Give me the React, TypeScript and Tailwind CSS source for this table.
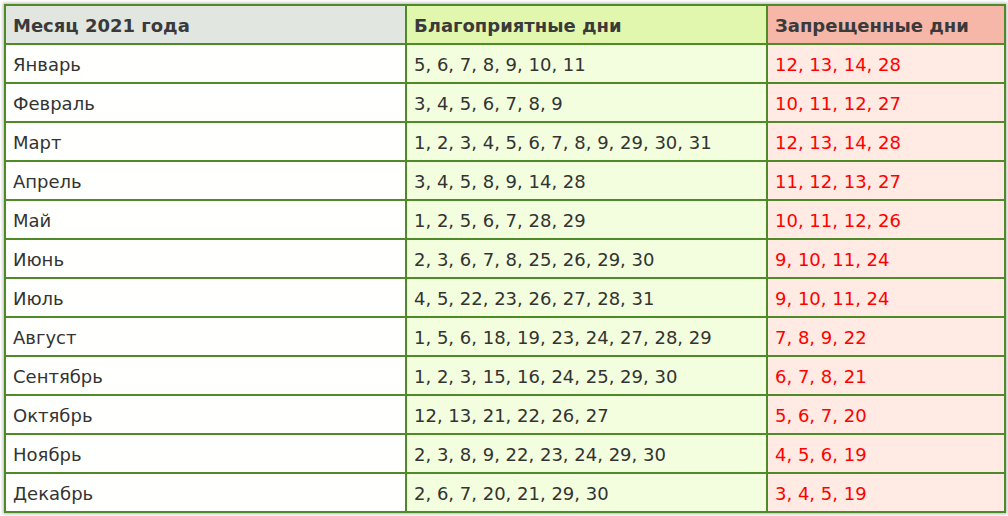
import React from "react";

const rows: [string, string, string][] = [
  ["Январь", "5, 6, 7, 8, 9, 10, 11", "12, 13, 14, 28"],
  ["Февраль", "3, 4, 5, 6, 7, 8, 9", "10, 11, 12, 27"],
  ["Март", "1, 2, 3, 4, 5, 6, 7, 8, 9, 29, 30, 31", "12, 13, 14, 28"],
  ["Апрель", "3, 4, 5, 8, 9, 14, 28", "11, 12, 13, 27"],
  ["Май", "1, 2, 5, 6, 7, 28, 29", "10, 11, 12, 26"],
  ["Июнь", "2, 3, 6, 7, 8, 25, 26, 29, 30", "9, 10, 11, 24"],
  ["Июль", "4, 5, 22, 23, 26, 27, 28, 31", "9, 10, 11, 24"],
  ["Август", "1, 5, 6, 18, 19, 23, 24, 27, 28, 29", "7, 8, 9, 22"],
  ["Сентябрь", "1, 2, 3, 15, 16, 24, 25, 29, 30", "6, 7, 8, 21"],
  ["Октябрь", "12, 13, 21, 22, 26, 27", "5, 6, 7, 20"],
  ["Ноябрь", "2, 3, 8, 9, 22, 23, 24, 29, 30", "4, 5, 6, 19"],
  ["Декабрь", "2, 6, 7, 20, 21, 29, 30", "3, 4, 5, 19"],
];

export default function App() {
  const cell = "h-[39px] border-r-2 border-b-2 border-[#4e8a28] flex items-center pl-[7px] pt-[2px] whitespace-nowrap";
  return (
    <div className="w-[1008px] h-[516px] bg-white pt-[4px] pl-[4px]" style={{ fontFamily: '"DejaVu Sans", sans-serif' }}>
      <div className="w-[1002px] grid grid-cols-[401px_361px_238px] border-l-2 border-t-2 border-[#4e8a28] shadow-[0_0_3px_1px_#b8b8b8] text-[18px] text-[#333]">
        <div className={`${cell} bg-[#e2e6e1] font-bold text-[#3a3a3a]`}>Месяц 2021 года</div>
        <div className={`${cell} bg-[#e1f7ae] font-bold text-[#3a3a3a]`}>Благоприятные дни</div>
        <div className={`${cell} bg-[#f6b6a8] font-bold text-[#3a3a3a]`}>Запрещенные дни</div>
        {rows.map(([m, good, bad]) => (
          <React.Fragment key={m}>
            <div className={`${cell} bg-[#fffffd]`}>{m}</div>
            <div className={`${cell} bg-[#f2fedd]`}>{good}</div>
            <div className={`${cell} bg-[#ffebe3] text-[#ff0000]`}>{bad}</div>
          </React.Fragment>
        ))}
      </div>
    </div>
  );
}
